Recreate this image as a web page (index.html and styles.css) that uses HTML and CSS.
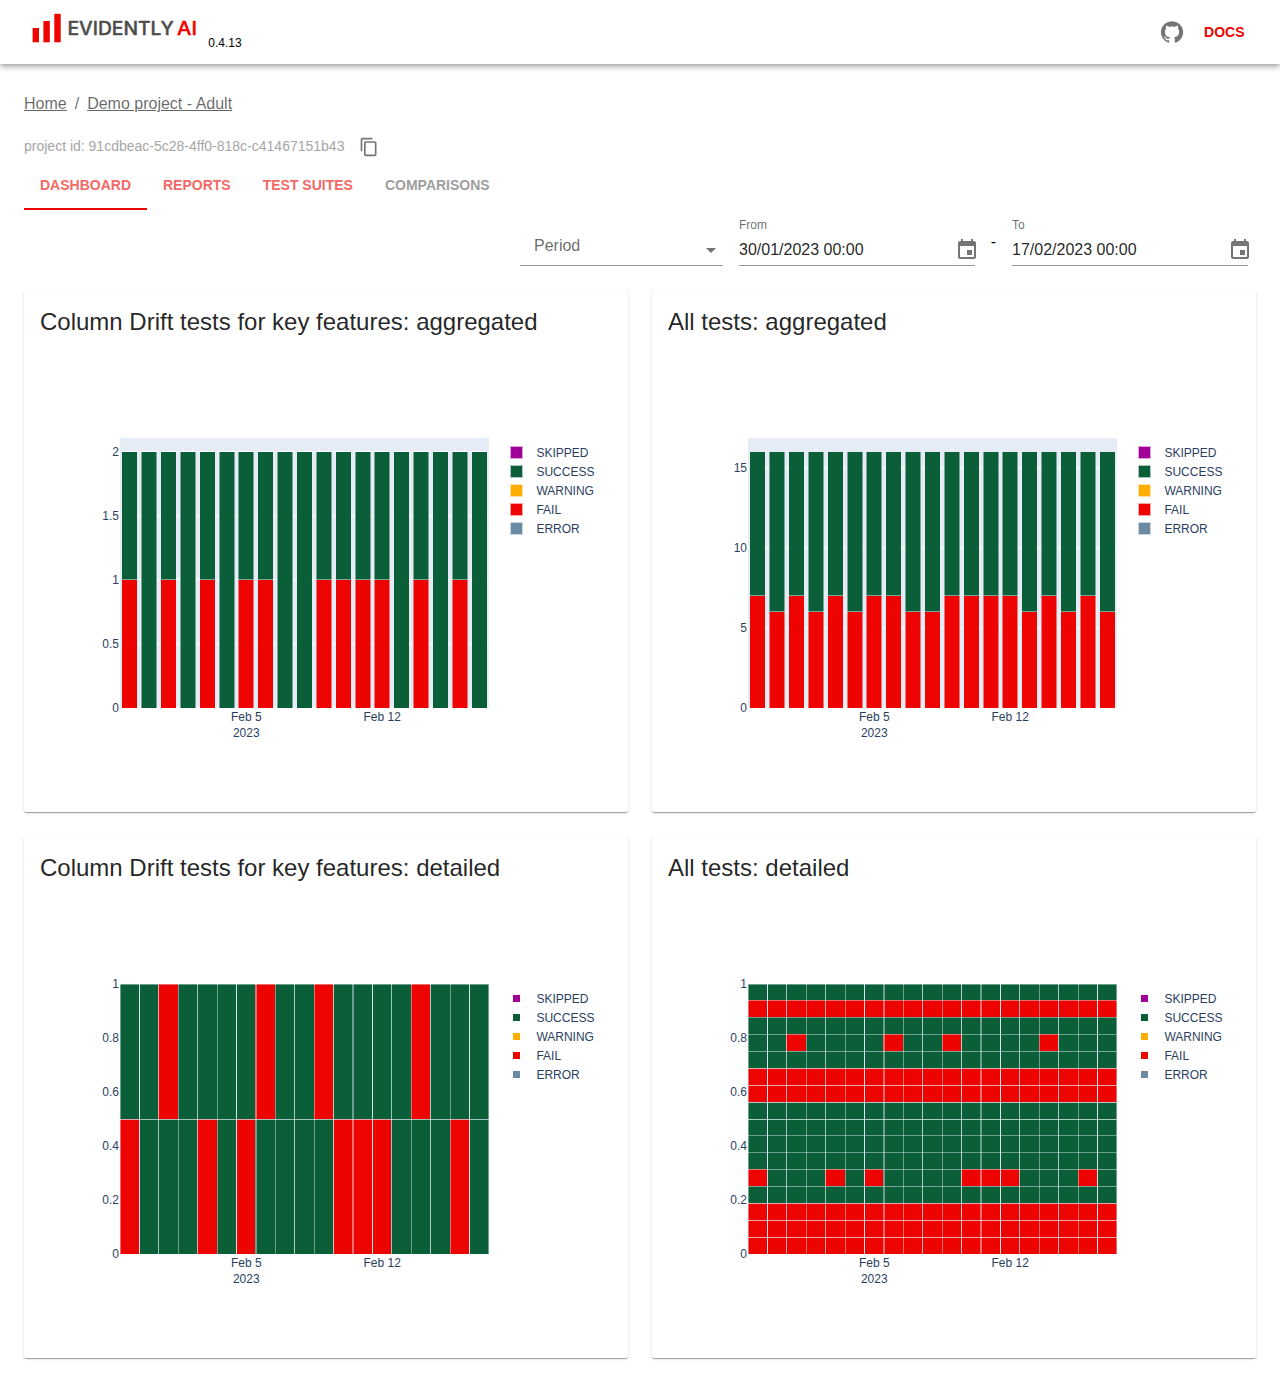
FILE: index.html
```html
<!DOCTYPE html>
<html lang="en">
<head>
<meta charset="utf-8">
<title>Evidently AI</title>
<link rel="stylesheet" href="styles.css">
</head>
<body>
<header class="appbar">
  <div class="brand">
    <svg class="logo" width="176" height="48" viewBox="0 0 176 48" role="img" aria-label="Evidently AI">
      <g fill="#ed0400">
        <rect x="8.6" y="20" width="6.4" height="14.3"/>
        <rect x="19.4" y="13" width="6.4" height="21.3"/>
        <rect x="30.3" y="5.8" width="6.4" height="28.5"/>
      </g>
      <text class="logo-text" x="43.4" y="27" textLength="106.5" lengthAdjust="spacingAndGlyphs">EVIDENTLY</text>
      <text class="logo-text logo-ai" x="153" y="27" textLength="20" lengthAdjust="spacingAndGlyphs">AI</text>
    </svg>
    <span class="version">0.4.13</span>
  </div>
  <div class="links">
    <svg class="github" width="24" height="24" viewBox="0 0 24 24"><path d="M12 1.27a11 11 0 00-3.48 21.46c.55.09.73-.28.73-.55v-1.84c-3.03.64-3.67-1.46-3.67-1.46-.55-1.29-1.28-1.65-1.28-1.65-.92-.65.1-.65.1-.65 1.1 0 1.73 1.1 1.73 1.1.92 1.65 2.57 1.2 3.21.92a2 2 0 01.64-1.47c-2.47-.27-5.04-1.19-5.04-5.5 0-1.1.46-2.1 1.2-2.84a3.76 3.76 0 010-2.93s.91-.28 3.11 1.1c1.8-.49 3.7-.49 5.5 0 2.1-1.38 3.02-1.1 3.02-1.1a3.76 3.76 0 01.1 2.93c.83.74 1.2 1.74 1.2 2.94 0 4.21-2.57 5.13-5.04 5.4.45.37.82.92.82 2.02v3.03c0 .27.1.64.73.55A11 11 0 0012 1.27"/></svg>
    <a class="docs">DOCS</a>
  </div>
</header>
<main class="page">
  <nav class="crumbs"><a class="crumb">Home</a><span>/</span><a class="crumb">Demo project - Adult</a></nav>
  <div class="project">
    <span class="project-id">project id: 91cdbeac-5c28-4ff0-818c-c41467151b43</span>
    <svg class="icon" width="20" height="20" viewBox="0 0 24 24"><path d="M16 1H4c-1.1 0-2 .9-2 2v14h2V3h12V1zm3 4H8c-1.1 0-2 .9-2 2v14c0 1.1.9 2 2 2h11c1.1 0 2-.9 2-2V7c0-1.1-.9-2-2-2zm0 16H8V7h11v14z"/></svg>
  </div>
  <div class="tabs">
    <a class="tab selected">DASHBOARD</a><a class="tab">REPORTS</a><a class="tab">TEST SUITES</a><a class="tab muted">COMPARISONS</a>
  </div>
  <div class="filters">
    <div class="field period"><span class="placeholder">Period</span>
      <svg class="icon" width="24" height="24" viewBox="0 0 24 24"><path d="M7 10l5 5 5-5z"/></svg></div>
    <div class="date"><label>From</label>
      <div class="field"><span>30/01/2023 00:00</span>
        <svg class="icon cal" width="24" height="24" viewBox="0 0 24 24"><path d="M17 12h-5v5h5v-5zM16 1v2H8V1H6v2H5c-1.11 0-1.99.9-1.99 2L3 19c0 1.1.89 2 2 2h14c1.1 0 2-.9 2-2V5c0-1.1-.9-2-2-2h-1V1h-2zm3 18H5V8h14v11z"/></svg></div></div>
    <span class="dash">-</span>
    <div class="date"><label>To</label>
      <div class="field"><span>17/02/2023 00:00</span>
        <svg class="icon cal" width="24" height="24" viewBox="0 0 24 24"><path d="M17 12h-5v5h5v-5zM16 1v2H8V1H6v2H5c-1.11 0-1.99.9-1.99 2L3 19c0 1.1.89 2 2 2h14c1.1 0 2-.9 2-2V5c0-1.1-.9-2-2-2h-1V1h-2zm3 18H5V8h14v11z"/></svg></div></div>
  </div>
  <div class="grid">
    <section class="card"><h2>Column Drift tests for key features: aggregated</h2><svg class="chart" id="drift-agg" width="604" height="450"></svg></section>
    <section class="card"><h2>All tests: aggregated</h2><svg class="chart" id="all-agg" width="604" height="450"></svg></section>
    <section class="card"><h2>Column Drift tests for key features: detailed</h2><svg class="chart" id="drift-det" width="604" height="450"></svg></section>
    <section class="card"><h2>All tests: detailed</h2><svg class="chart" id="all-det" width="604" height="450"></svg></section>
  </div>
</main>
<script src="charts.js"></script>
</body>
</html>
```
FILE: styles.css
```css
* { box-sizing: border-box; }
body {
  margin: 0;
  background: #fff;
  color: rgba(0, 0, 0, .87);
  font-family: "Liberation Sans", Arial, sans-serif;
}
.appbar {
  height: 64px;
  padding: 0 24px;
  display: flex;
  justify-content: space-between;
  background: #fff;
  box-shadow: 0 2px 4px -1px rgba(0,0,0,.2), 0 4px 5px 0 rgba(0,0,0,.14), 0 1px 10px 0 rgba(0,0,0,.12);
}
.brand { display: flex; padding-top: 8px; }
.logo { display: block; }
.logo-text { font: 500 18.5px Inter, sans-serif; fill: #4d4d4d; stroke: #4d4d4d; stroke-width: .4px; }
.logo-ai { fill: #ed0400; stroke: #ed0400; }
.version { font-size: 12px; line-height: 14px; color: #000; margin: 28px 0 0 8.3px; }
.links { display: flex; align-items: center; gap: 20.5px; padding-right: 11.5px; }
.github { fill: #757575; }
.docs { color: #ed0400; font-size: 14px; font-weight: 700; }
.page { padding: 28px 24px 24px; }
.crumbs { display: flex; gap: 8px; font-size: 16px; line-height: 24px; color: rgba(0,0,0,.6); }
.crumb { text-decoration: underline; }
.project { display: flex; align-items: center; gap: 15px; height: 38px; margin-top: 12px; font-size: 14px; color: #a6a6a6; }
.project-id { padding-bottom: 2px; }
.icon { fill: #757575; }
.tabs { display: flex; height: 48px; margin-top: -4px; }
.tab { padding: 0 16px; line-height: 46px; font-size: 14px; font-weight: 700; color: #f46866; }
.selected { border-bottom: 2px solid #ed0400; }
.muted { color: #9e9e9e; }
.filters { display: flex; justify-content: flex-end; align-items: flex-end; height: 56px; padding-right: 8px; }
.field { display: flex; justify-content: space-between; align-items: center; height: 33px; border-bottom: 1px solid #949494; font-size: 16px; }
.date .field { padding-top: 2px; }
.period { width: 203px; height: 40px; margin-right: 16px; padding-left: 14px; color: rgba(0,0,0,.6); }
.period .icon { margin-top: 8px; }
.date { width: 236px; }
.date label { display: block; font-size: 12px; line-height: 16px; color: rgba(0,0,0,.6); }
.cal { margin-right: -4px; }
.dash { width: 37px; padding-bottom: 15px; text-align: center; font-size: 16px; line-height: 18px; color: #000; }
.grid { display: grid; grid-template-columns: 1fr 1fr; gap: 24px; margin-top: 24px; }
.card {
  height: 522px;
  border-radius: 2px;
  background: #fff;
  box-shadow: 0 2px 1px -1px rgba(0,0,0,.2), 0 1px 1px 0 rgba(0,0,0,.14), 0 1px 3px 0 rgba(0,0,0,.12);
}
.card h2 { margin: 0; height: 72px; padding: 16px; font-size: 24px; font-weight: 400; line-height: 32px; }
.chart { display: block; shape-rendering: crispEdges; }
.chart text { font-size: 12px; fill: #2a3f5f; }
```
FILE: charts.js
```js
const NS = 'http://www.w3.org/2000/svg';
const GREEN = '#0a5f38', RED = '#ed0400', PALE = '#e5ecf6';
const LEGEND = [['SKIPPED', '#a00098'], ['SUCCESS', GREEN], ['WARNING', '#ffad01'], ['FAIL', RED], ['ERROR', '#6b8ba4']];
const X = 96, Y = 76, W = 369, H = 270, DAYS = 19;

function rect(svg, x, y, w, h, fill, opacity = 1) {
  const r = document.createElementNS(NS, 'rect');
  Object.entries({ x, y, width: w, height: h, fill, opacity }).forEach(([k, v]) => r.setAttribute(k, v));
  svg.append(r);
}
function text(svg, x, y, value, anchor = 'start') {
  const t = document.createElementNS(NS, 'text');
  t.setAttribute('x', x);
  t.setAttribute('y', y);
  t.setAttribute('text-anchor', anchor);
  t.textContent = value;
  svg.append(t);
}
function labels(svg, ticks, small) {
  ticks.forEach(([label, y]) => text(svg, 95, y + 4, label, 'end'));
  text(svg, 222.3, 359, 'Feb 5', 'middle');
  text(svg, 222.3, 375, '2023', 'middle');
  text(svg, 358.2, 359, 'Feb 12', 'middle');
  LEGEND.forEach(([name, color], i) => {
    const y = 84 + 19 * i;
    if (small) {
      rect(svg, 489, y + 3, 7, 7, color);
    } else {
      rect(svg, 486, y, 13, 13, color, 0.35);
      rect(svg, 487, y + 1, 11, 11, color);
    }
    text(svg, 512.4, y + 11, name);
  });
}
function bars(id, total, fails, ticks) {
  const svg = document.getElementById(id);
  const unit = 256 / total, base = Y + H, step = W / DAYS;
  rect(svg, X, Y, W, H, PALE);
  ticks.forEach(([, y]) => rect(svg, X, y - 1, W, 1, '#fff'));
  fails.forEach((n, i) => {
    const x0 = Math.round(step * (i + 0.1)), x1 = Math.round(step * (i + 0.9));
    const w = x1 - x0, split = base - n * unit;
    rect(svg, X + x0, base - 256, w, 256, GREEN);
    if (n) {
      rect(svg, X + x0, split, w, n * unit, RED);
      rect(svg, X + x0, split - 1, w, 1, PALE, 0.5);
    }
    if (w === 16) {
      rect(svg, X + x0, base - 256, 1, 256, PALE, 0.5);
      rect(svg, X + x1 - 1, base - 256, 1, 256, PALE, 0.5);
    }
  });
  labels(svg, ticks, false);
}
// Column separators: [offset, width, opacity]
const COLS = [[0, 1, .45], [19, 1, .95], [38, 1, .7], [58, 1, .45], [77, 1, .7], [97, 1, .45], [116, 1, .95], [135, 2, .45],
  [155, 1, .45], [174, 1, .75], [194, 1, .45], [213, 1, .8], [232, 2, .45], [252, 1, .95], [271, 1, .7], [291, 1, .45],
  [310, 1, .75], [330, 1, .45], [349, 1, .95], [368, 1, .45]];

function heatmap(id, rows, lines) {
  const svg = document.getElementById(id);
  const ticks = ['1', '0.8', '0.6', '0.4', '0.2', '0'].map((t, i) => [t, Y + 54 * i]);
  rect(svg, X, Y, W, H, GREEN);
  rows.forEach((reds, r) => {
    const top = lines[r][0], bottom = r + 1 < lines.length ? lines[r + 1][0] : H;
    reds.forEach(c => rect(svg, X + COLS[c][0], Y + top, COLS[c + 1][0] - COLS[c][0] + (c === 18 ? 1 : 0), bottom - top, RED));
  });
  COLS.forEach(([x, w, o]) => rect(svg, X + x, Y, w, H, PALE, o));
  lines.forEach(([y, o]) => rect(svg, X, Y + y, W, 1, PALE, o));
  labels(svg, ticks, true);
}

const educationDrift = [2, 7, 10, 15], ageDrift = [0, 4, 6, 11, 12, 13, 17];
const every = [...Array(DAYS).keys()];
const drifted = every.map(i => (educationDrift.includes(i) || ageDrift.includes(i) ? 1 : 0));

bars('drift-agg', 2, drifted, [['2', 90], ['1.5', 154], ['1', 218], ['0.5', 282], ['0', 346]]);
bars('all-agg', 16, drifted.map(n => n + 6), [['15', 106], ['10', 186], ['5', 266], ['0', 346]]);
heatmap('drift-det', [educationDrift, ageDrift], [[0, .45], [135, .7]]);
heatmap('all-det',
  [[], every, [], educationDrift, [], every, every, [], [], [], [], ageDrift, [], every, every, every],
  [[0, .45], [16, .45], [33, .45], [50, .45], [67, .5], [84, .7], [101, .7], [118, .75], [135, .75], [151, .45],
    [168, .45], [185, .5], [202, .5], [219, .7], [236, .7], [253, .7]]);
```
